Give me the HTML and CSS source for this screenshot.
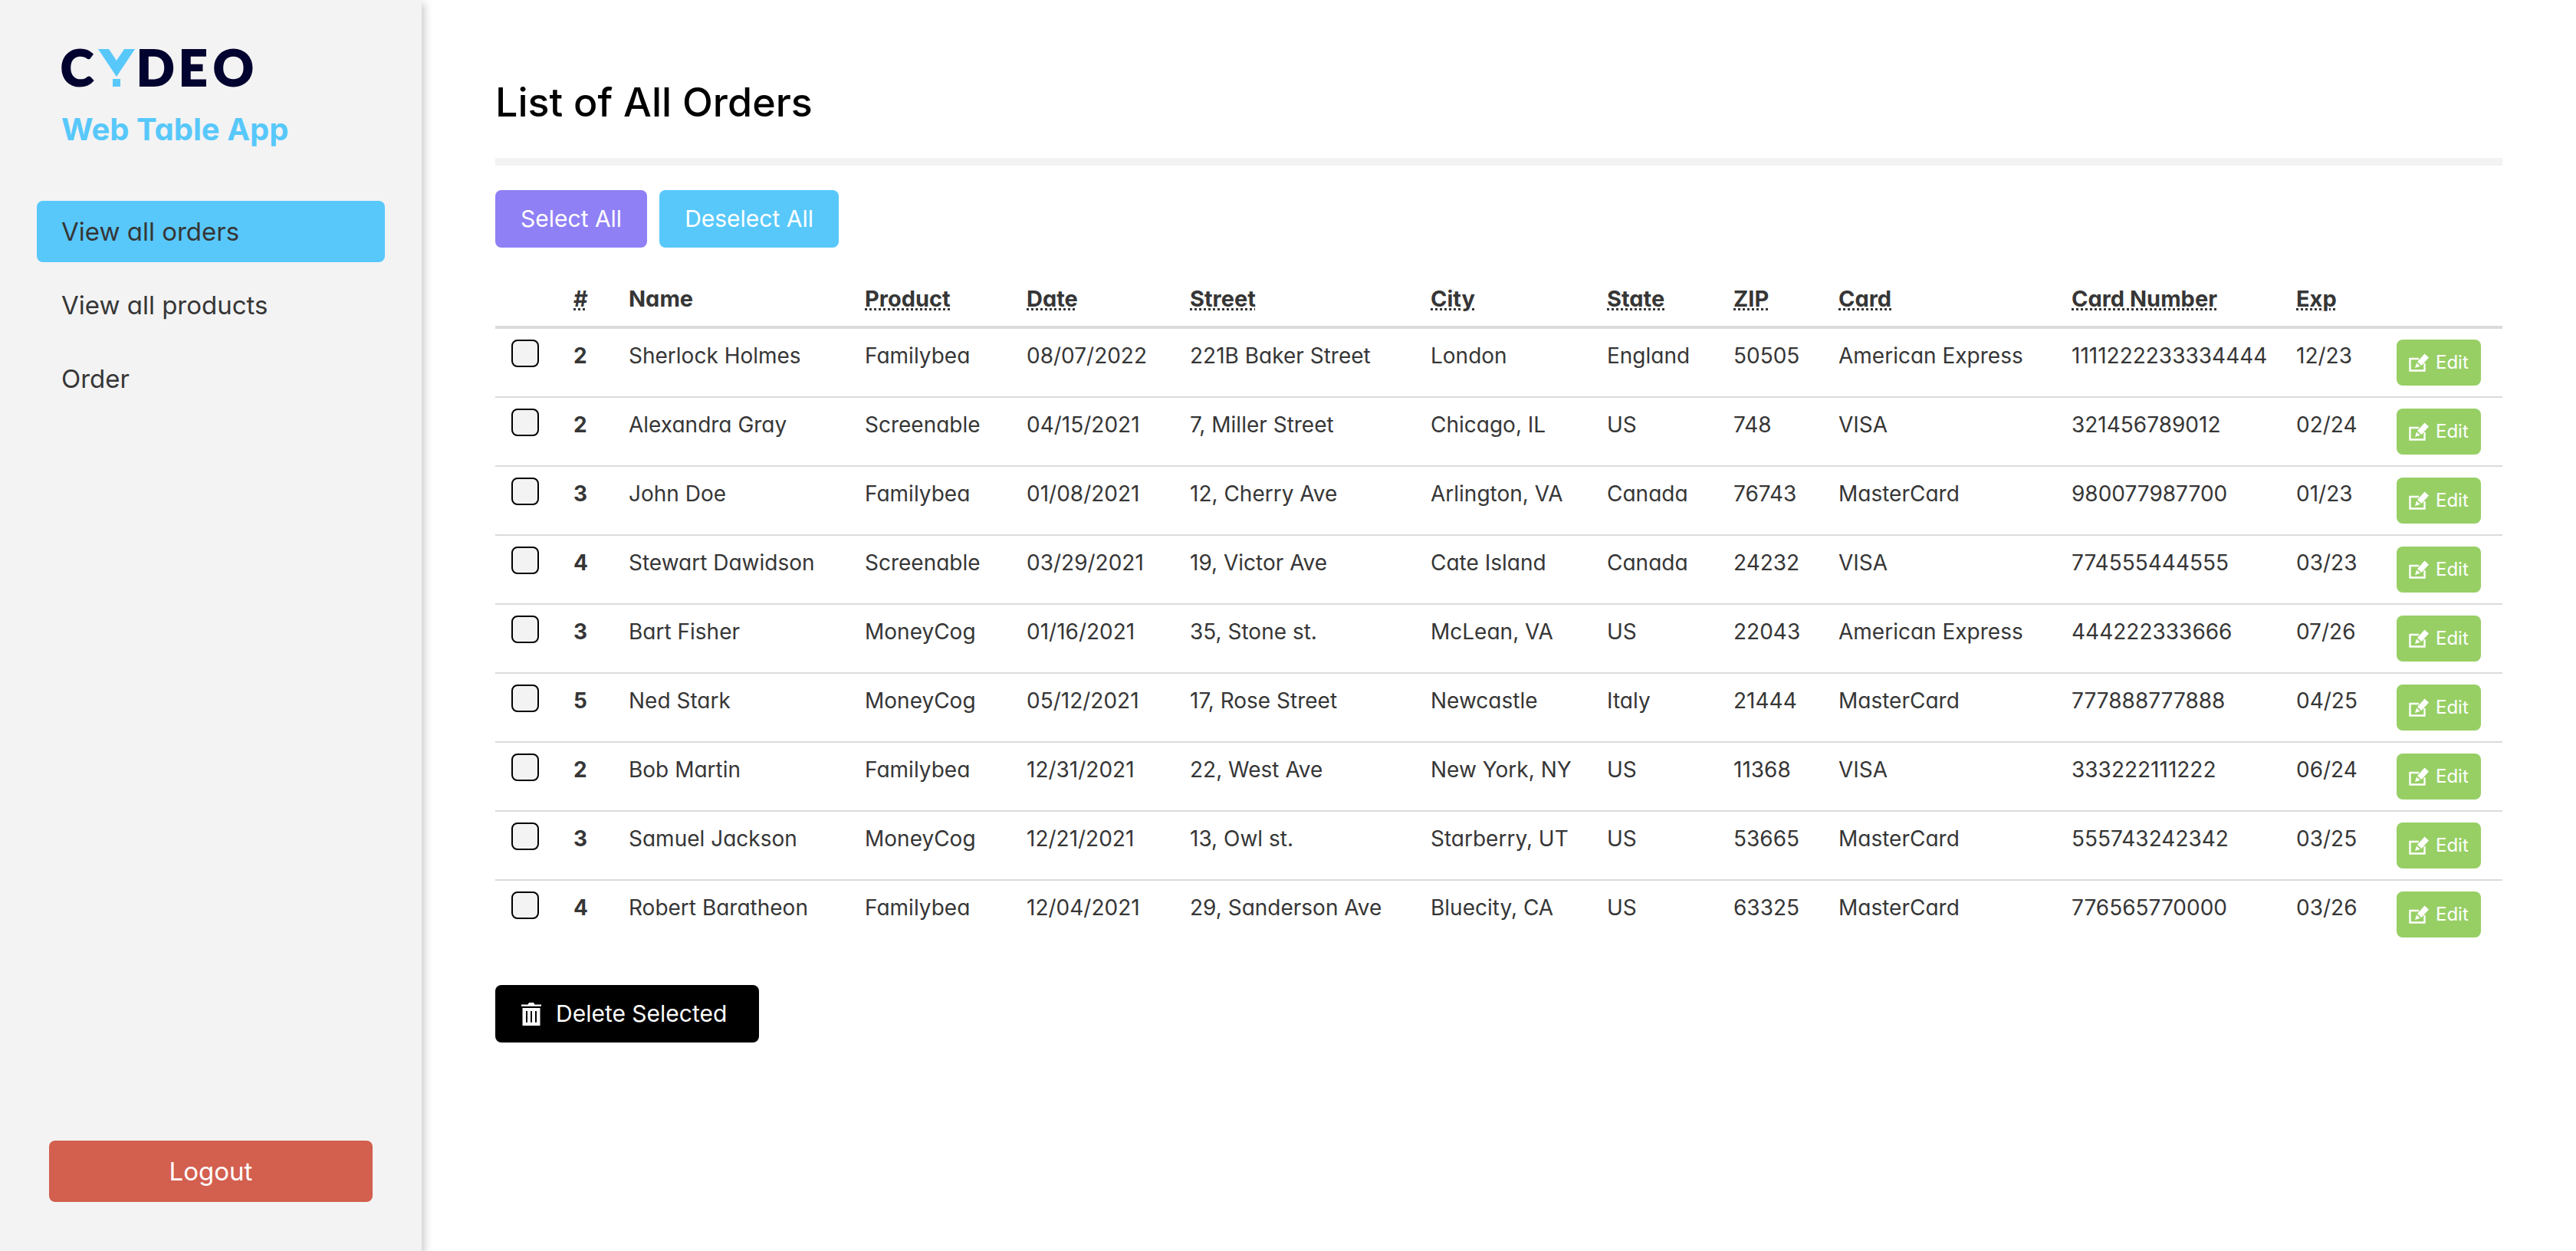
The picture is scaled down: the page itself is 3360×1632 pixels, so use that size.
FILE: index.html
```html
<!DOCTYPE html>
<html lang="en">
<head>
<meta charset="utf-8">
<meta name="viewport" content="width=device-width, initial-scale=1">
<title>Web Table App</title>
<link rel="stylesheet" href="styles.css">
</head>
<body>
<svg width="0" height="0" class="sprite" aria-hidden="true">
  <symbol id="icon-edit" viewBox="0 0 26 24">
    <path d="M13 7H1.5v15.500h19V13" fill="none" stroke="currentColor" stroke-width="2.400"/>
    <path d="M20.500 0.500l5.500 5-9.500 10.500-5.500-5z" fill="currentColor"/>
    <path d="M10 12.500l4.800 4.300-6.800 2.200z" fill="currentColor"/>
  </symbol>
  <symbol id="icon-trash" viewBox="0 0 28 30">
    <path d="M1 2.500h8.500L11 0h6l1.500 2.500H27v2.300H1z" fill="currentColor"/>
    <path fill-rule="evenodd" d="M2.500 7h23v23h-23zM7 11v14q0 1 1 1t1-1V11zM13 11v14q0 1 1 1t1-1V11zM19 11v14q0 1 1 1t1-1V11z" fill="currentColor"/>
  </symbol>
</svg>
<div class="layout">
  <aside class="sidebar">
    <svg class="logo" viewBox="0 0 250 49" role="img" aria-label="Cydeo">
      <text class="logo-text" x="-1 98 153 198" y="48">CDEO</text>
      <polygon class="logo-mark" points="48,0 62,0 72,15 82,0 96,0 72,36"/>
      <rect class="logo-mark" x="67" y="39" width="10" height="10"/>
    </svg>
    <p class="app-name">Web Table App</p>
    <nav class="menu">
      <a class="menu-link active" href="#orders">View all orders</a>
      <a class="menu-link" href="#products">View all products</a>
      <a class="menu-link" href="#order">Order</a>
    </nav>
    <button class="logout" type="button">Logout</button>
  </aside>
  <main class="content">
    <h1 class="title">List of All Orders</h1>
    <div class="actions">
      <button class="button purple" type="button">Select All</button>
      <button class="button blue" type="button">Deselect All</button>
    </div>
    <table class="orders">
      <colgroup>
        <col class="c-check"><col class="c-qty"><col class="c-name"><col class="c-product"><col class="c-date"><col class="c-street"><col class="c-city"><col class="c-state"><col class="c-zip"><col class="c-card"><col class="c-number"><col class="c-exp"><col class="c-edit">
      </colgroup>
      <thead>
        <tr><th></th><th><abbr title="Quantity">#</abbr></th><th>Name</th><th><abbr title="Product">Product</abbr></th><th><abbr title="Date">Date</abbr></th><th><abbr title="Street">Street</abbr></th><th><abbr title="City">City</abbr></th><th><abbr title="State">State</abbr></th><th><abbr title="ZIP">ZIP</abbr></th><th><abbr title="Card">Card</abbr></th><th><abbr title="Card Number">Card Number</abbr></th><th><abbr title="Expiration">Exp</abbr></th><th></th></tr>
      </thead>
      <tbody>
        <tr><td><input class="check" type="checkbox" aria-label="Select Sherlock Holmes"></td><th>2</th><td>Sherlock Holmes</td><td>Familybea</td><td>08/07/2022</td><td>221B Baker Street</td><td>London</td><td>England</td><td>50505</td><td>American Express</td><td>1111222233334444</td><td>12/23</td><td><button class="edit" type="button"><svg class="edit-icon"><use href="#icon-edit"/></svg>Edit</button></td></tr>
        <tr><td><input class="check" type="checkbox" aria-label="Select Alexandra Gray"></td><th>2</th><td>Alexandra Gray</td><td>Screenable</td><td>04/15/2021</td><td>7, Miller Street</td><td>Chicago, IL</td><td>US</td><td>748</td><td>VISA</td><td>321456789012</td><td>02/24</td><td><button class="edit" type="button"><svg class="edit-icon"><use href="#icon-edit"/></svg>Edit</button></td></tr>
        <tr><td><input class="check" type="checkbox" aria-label="Select John Doe"></td><th>3</th><td>John Doe</td><td>Familybea</td><td>01/08/2021</td><td>12, Cherry Ave</td><td>Arlington, VA</td><td>Canada</td><td>76743</td><td>MasterCard</td><td>980077987700</td><td>01/23</td><td><button class="edit" type="button"><svg class="edit-icon"><use href="#icon-edit"/></svg>Edit</button></td></tr>
        <tr><td><input class="check" type="checkbox" aria-label="Select Stewart Dawidson"></td><th>4</th><td>Stewart Dawidson</td><td>Screenable</td><td>03/29/2021</td><td>19, Victor Ave</td><td>Cate Island</td><td>Canada</td><td>24232</td><td>VISA</td><td>774555444555</td><td>03/23</td><td><button class="edit" type="button"><svg class="edit-icon"><use href="#icon-edit"/></svg>Edit</button></td></tr>
        <tr><td><input class="check" type="checkbox" aria-label="Select Bart Fisher"></td><th>3</th><td>Bart Fisher</td><td>MoneyCog</td><td>01/16/2021</td><td>35, Stone st.</td><td>McLean, VA</td><td>US</td><td>22043</td><td>American Express</td><td>444222333666</td><td>07/26</td><td><button class="edit" type="button"><svg class="edit-icon"><use href="#icon-edit"/></svg>Edit</button></td></tr>
        <tr><td><input class="check" type="checkbox" aria-label="Select Ned Stark"></td><th>5</th><td>Ned Stark</td><td>MoneyCog</td><td>05/12/2021</td><td>17, Rose Street</td><td>Newcastle</td><td>Italy</td><td>21444</td><td>MasterCard</td><td>777888777888</td><td>04/25</td><td><button class="edit" type="button"><svg class="edit-icon"><use href="#icon-edit"/></svg>Edit</button></td></tr>
        <tr><td><input class="check" type="checkbox" aria-label="Select Bob Martin"></td><th>2</th><td>Bob Martin</td><td>Familybea</td><td>12/31/2021</td><td>22, West Ave</td><td>New York, NY</td><td>US</td><td>11368</td><td>VISA</td><td>333222111222</td><td>06/24</td><td><button class="edit" type="button"><svg class="edit-icon"><use href="#icon-edit"/></svg>Edit</button></td></tr>
        <tr><td><input class="check" type="checkbox" aria-label="Select Samuel Jackson"></td><th>3</th><td>Samuel Jackson</td><td>MoneyCog</td><td>12/21/2021</td><td>13, Owl st.</td><td>Starberry, UT</td><td>US</td><td>53665</td><td>MasterCard</td><td>555743242342</td><td>03/25</td><td><button class="edit" type="button"><svg class="edit-icon"><use href="#icon-edit"/></svg>Edit</button></td></tr>
        <tr><td><input class="check" type="checkbox" aria-label="Select Robert Baratheon"></td><th>4</th><td>Robert Baratheon</td><td>Familybea</td><td>12/04/2021</td><td>29, Sanderson Ave</td><td>Bluecity, CA</td><td>US</td><td>63325</td><td>MasterCard</td><td>776565770000</td><td>03/26</td><td><button class="edit" type="button"><svg class="edit-icon"><use href="#icon-edit"/></svg>Edit</button></td></tr>
      </tbody>
    </table>
    <button class="button black" type="button"><svg class="trash-icon"><use href="#icon-trash"/></svg>Delete Selected</button>
  </main>
</div>
</body>
</html>
```
FILE: styles.css
```css
* {
  box-sizing: border-box;
}

body {
  margin: 0;
  background: #fff;
  color: #363636;
  font-family: Inter, "Noto Sans", sans-serif;
  font-feature-settings: "cv11";
  font-size: 28px;
  line-height: 42px;
}

.sprite {
  position: absolute;
}

.layout {
  display: flex;
  min-height: 100vh;
}

/* Sidebar */
.sidebar {
  display: flex;
  flex-direction: column;
  flex: 0 0 550px;
  padding: 64px 48px;
  background: #f3f3f3;
  box-shadow: 4px 4px 10px rgba(0, 0, 0, 0.2);
}

.logo {
  width: 250px;
  height: 49px;
  margin-left: 32px;
  overflow: visible;
}

.logo-text {
  fill: #030330;
  stroke: #030330;
  stroke-width: 2px;
  font-family: Lato, sans-serif;
  font-size: 65px;
  font-weight: 900;
}

.logo-mark {
  fill: #58c8fb;
}

.app-name {
  margin: 26px 32px 63px;
  color: #58c8fb;
  font-size: 40px;
  font-weight: 700;
  line-height: 60px;
}

.menu {
  display: flex;
  flex-direction: column;
  gap: 16px;
}

.menu-link {
  padding: 16px 32px;
  border-radius: 8px;
  color: #363636;
  font-size: 33px;
  line-height: 48px;
  text-decoration: none;
}

.menu-link.active {
  background: #58c8fb;
}

button {
  border: 0;
  border-radius: 8px;
  color: #fff;
  font-family: inherit;
  font-feature-settings: inherit;
  cursor: pointer;
}

.logout {
  margin: auto 16px 0;
  padding: 16px;
  background: #d35f4e;
  font-size: 33px;
  line-height: 48px;
}

/* Content */
.content {
  flex: 1;
  min-width: 0;
  padding: 95px 96px 64px;
}

.title {
  margin: 0 0 32px;
  padding-bottom: 33px;
  border-bottom: 10px solid #f3f3f3;
  color: #000;
  font-size: 52px;
  font-weight: 500;
  line-height: 78px;
}

.actions {
  display: flex;
  gap: 16px;
  margin-bottom: 32px;
}

.button {
  display: inline-flex;
  align-items: center;
  gap: 18px;
  padding: 15px 33px;
  font-size: 30px;
  line-height: 45px;
}

.purple {
  background: #8f80f6;
}

.blue {
  background: #58c8fb;
}

.black {
  padding-right: 42px;
  background: #000;
}

.trash-icon {
  width: 28px;
  height: 30px;
}

/* Orders table */
.orders {
  width: 100%;
  margin-bottom: 48px;
  border-collapse: separate;
  border-spacing: 0;
  table-layout: fixed;
}

.c-check { width: 81px; }
.c-qty { width: 72px; }
.c-name { width: 308px; }
.c-product { width: 211px; }
.c-date { width: 213px; }
.c-street { width: 314px; }
.c-city { width: 230px; }
.c-state { width: 165px; }
.c-zip { width: 137px; }
.c-card { width: 304px; }
.c-number { width: 293px; }
.c-exp { width: 131px; }
.c-edit { width: 159px; }

.orders th,
.orders td {
  padding: 14px 0 14px 21px;
  border-bottom: 2px solid #dbdbdb;
  text-align: left;
  vertical-align: top;
  white-space: nowrap;
}

.orders thead th {
  border-bottom-width: 4px;
  font-size: 29px;
}

.orders tbody tr:last-child th,
.orders tbody tr:last-child td {
  border-bottom: 0;
}

.orders abbr {
  text-decoration: underline dotted 3px;
  text-underline-offset: 2px;
}

.check {
  display: block;
  width: 36px;
  height: 36px;
  margin: 0;
  border: 2px solid #000;
  border-radius: 8px;
  background: #f3f3f3;
  appearance: none;
}

.check:checked {
  background: #58c8fb;
}

.edit {
  display: flex;
  align-items: center;
  gap: 9px;
  padding: 12px 16px;
  background: #97cf65;
  font-size: 24px;
  line-height: 36px;
}

.edit-icon {
  width: 26px;
  height: 24px;
}
```
